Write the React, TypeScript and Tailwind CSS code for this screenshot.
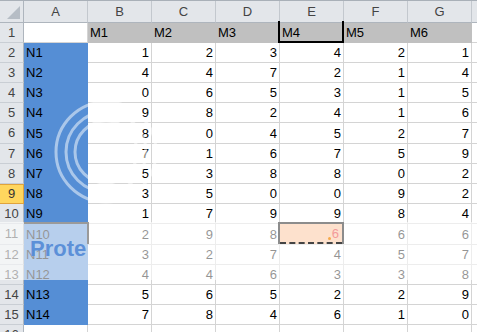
import React from "react";

const cols = ["A", "B", "C", "D", "E", "F", "G"];
const data = [
  [1, 2, 3, 4, 2, 1],
  [4, 4, 7, 2, 1, 4],
  [0, 6, 5, 3, 1, 5],
  [9, 8, 2, 4, 1, 6],
  [8, 0, 4, 5, 2, 7],
  [7, 1, 6, 7, 5, 9],
  [5, 3, 8, 8, 0, 2],
  [3, 5, 0, 0, 9, 2],
  [1, 7, 9, 9, 8, 4],
  [2, 9, 8, 6, 6, 6],
  [3, 2, 7, 4, 5, 7],
  [4, 4, 6, 3, 3, 8],
  [5, 6, 5, 2, 2, 9],
  [7, 8, 4, 6, 1, 0],
];

const font = { fontFamily: '"Liberation Sans", Arial, sans-serif' };

function RowHead({ n, active }: { n: number; active?: boolean }) {
  return (
    <div
      className={
        active
          ? "flex items-center justify-center border-y border-r border-[#e0a33c] bg-[#ffd65e] text-[13px] text-[#333]"
          : "flex items-center justify-center border-r border-b border-r-[#aeb5bd] border-b-[#c9ced4] bg-[#e3e6ea] text-[13px] text-[#444]"
      }
    >
      {n}
    </div>
  );
}

export default function App() {
  return (
    <div className="relative h-[332px] w-[477px] overflow-hidden bg-white" style={font}>
      <div className="grid grid-cols-[24px_repeat(7,64px)_1fr] grid-rows-[22px_repeat(5,20px)_21px_repeat(4,20px)_21px_repeat(5,20px)] border-t border-[#a9b0b8]">
        {/* column headers */}
        <div className="relative border-r border-b border-[#aeb5bd] bg-[#e3e6ea]">
          <svg className="absolute right-[3px] bottom-[3px]" width="13" height="13" viewBox="0 0 13 13">
            <polygon points="13,0 13,13 0,13" fill="#b6bdc5" />
          </svg>
        </div>
        {cols.map((c) => (
          <div
            key={c}
            className="flex items-center justify-center border-r border-b border-r-[#c3c8ce] border-b-[#aeb5bd] bg-[#e3e6ea] text-[13px] text-[#444]"
          >
            {c}
          </div>
        ))}
        <div className="border-b border-[#aeb5bd] bg-[#e3e6ea]" />

        {/* row 1 */}
        <RowHead n={1} />
        <div className="border-r border-b border-[#d4d4d4]" />
        {[1, 2, 3, 4, 5, 6].map((m) => (
          <div
            key={m}
            className="flex items-end border-r border-b border-[#c0c0c0] bg-[#c0c0c0] pb-[1px] pl-[2px] text-[13px] leading-[16px] text-black"
          >
            M{m}
          </div>
        ))}
        <div className="border-b border-[#d4d4d4]" />

        {/* data rows */}
        {data.map((row, i) => (
          <React.Fragment key={i}>
            <RowHead n={i + 2} active={i + 2 === 9} />
            <div className="flex items-end border-r border-b border-[#558ed5] bg-[#558ed5] pb-[1px] pl-[2px] text-[13px] leading-[16px] text-black">
              N{i + 1}
            </div>
            {row.map((v, j) => (
              <div
                key={j}
                className="flex items-end justify-end border-r border-b border-[#d4d4d4] pr-[2px] pb-[1px] text-[13px] leading-[16px] text-black"
              >
                {v}
              </div>
            ))}
            <div className="border-b border-[#d4d4d4]" />
          </React.Fragment>
        ))}

        {/* row 16, cut off */}
        <RowHead n={16} />
        {cols.map((c) => (
          <div key={c} className="border-r border-[#d4d4d4]" />
        ))}
        <div />
      </div>

      {/* watermark rings */}
      <svg className="pointer-events-none absolute top-0 left-0" width="477" height="332">
        <g fill="none" stroke="#ffffff" strokeWidth="3" strokeOpacity="0.5">
          <circle cx="106" cy="152" r="50" />
          <circle cx="106" cy="152" r="40" />
          <circle cx="106" cy="152" r="31" />
        </g>
      </svg>

      {/* watermark band */}
      <div className="pointer-events-none absolute top-[222px] left-0 h-[58px] w-full bg-white/[0.58]" />

      {/* A11 outline */}
      <div className="absolute top-[222px] left-[24px] h-[22px] w-[65px] border-t-2 border-r-2 border-[#9a9a9a]" />

      {/* E11 */}
      <div className="absolute top-[222px] left-[278px] flex h-[22px] w-[66px] flex-col border-x-2 border-t-2 border-[#8c8c8c] bg-[#fde1cd]">
        <div className="relative flex flex-1 items-end justify-end pr-[3px] text-[13px] leading-[16px] text-[#f39a9a]">
          <span className="absolute bottom-[2px] right-[11px] h-[3px] w-[3px] rounded-full bg-[#f6a94a]" />
          6
        </div>
        <div className="border-b-2 border-dashed border-[#444]" />
      </div>

      {/* E1 */}
      <div className="absolute top-[21px] left-[278px] h-[22px] w-[66px] border-x-2 border-b-2 border-black" />

      {/* watermark text */}
      <div className="pointer-events-none absolute top-[236px] left-[24px] h-[28px] w-[63px] overflow-hidden">
        <span className="block pl-[6px] text-[22px] font-bold leading-[26px] whitespace-nowrap text-[#5088d6]/90">
          Protect
        </span>
      </div>
    </div>
  );
}
